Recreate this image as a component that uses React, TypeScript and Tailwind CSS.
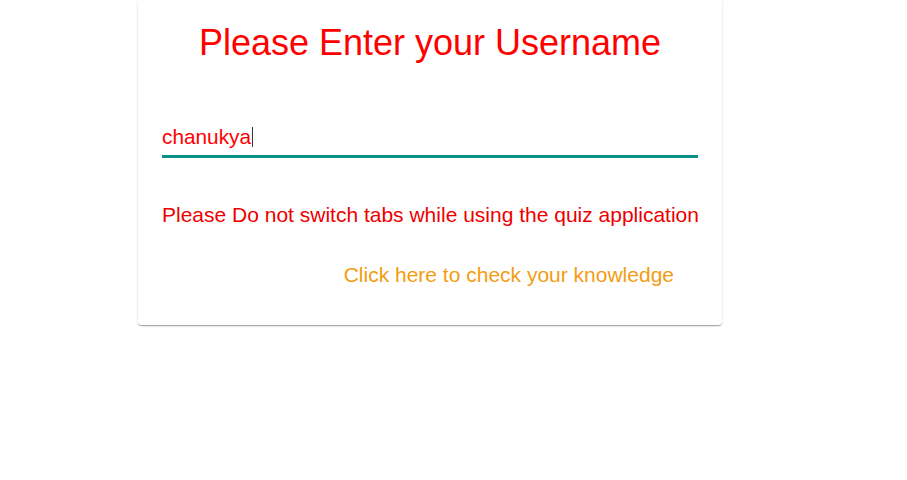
import * as React from 'react';

export default function App() {
    return (
        <div className="min-h-[480px] w-[907px] bg-white font-['Liberation_Sans',Arial,sans-serif]">
            <div className="ml-[138px] w-[584px] rounded-b-[4px] bg-white px-[24px] pt-[22px] pb-[38px] shadow-[0_2px_1px_-1px_rgba(0,0,0,0.2),0_1px_1px_0_rgba(0,0,0,0.14),0_1px_3px_0_rgba(0,0,0,0.12)]">
                <h1 className="text-center text-[36px] leading-[42px] text-[#ff0000]">Please Enter your Username</h1>

                <div className="mt-[61px] border-b-[3px] border-[#0a9187] pb-[6px]">
                    <div className="flex h-[24px] items-center text-[20.8px] leading-[24px] text-[#ff0000]">
                        <span>chanukya</span>
                        <span className="ml-[1px] h-[20px] w-[1px] bg-[#333333]" />
                    </div>
                </div>

                <p className="mt-[45px] whitespace-nowrap text-[21px] leading-[24px] text-[#ee0000]">
                    Please Do not switch tabs while using the quiz application
                </p>

                <div className="mt-[36px] flex justify-end pr-[24px]">
                    <a className="cursor-pointer whitespace-nowrap text-[21px] leading-[24px] text-[#f39c12]">
                        Click here to check your knowledge
                    </a>
                </div>
            </div>
        </div>
    );
}
